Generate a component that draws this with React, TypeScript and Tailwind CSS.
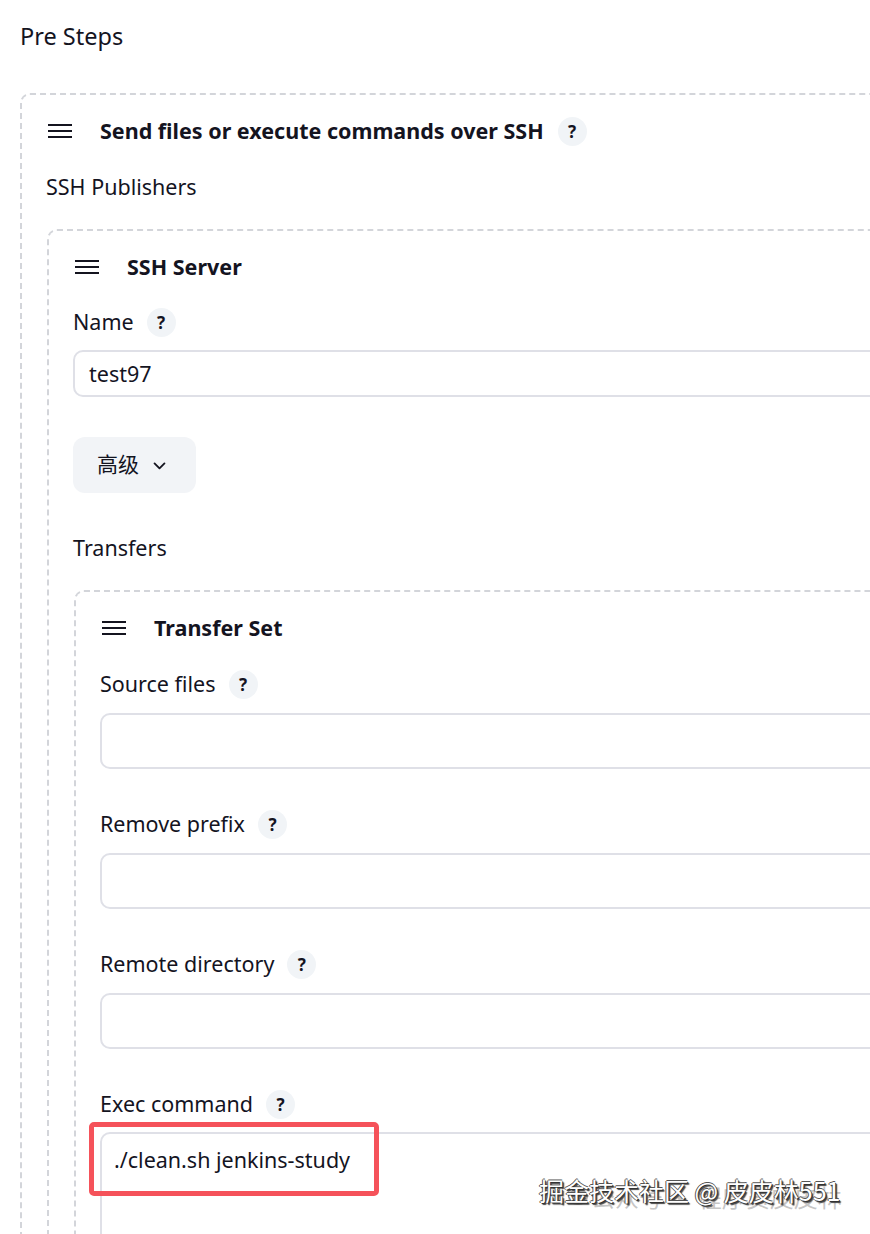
import type { ReactNode } from 'react';

const font = { fontFamily: '"Noto Sans", "Noto Sans CJK SC", sans-serif' };

function DragHandle() {
  return (
    <svg width="24" height="14" viewBox="0 0 24 14" className="shrink-0">
      <rect x="0" y="0" width="24" height="2" fill="#14141f" />
      <rect x="0" y="6" width="24" height="2" fill="#14141f" />
      <rect x="0" y="12" width="24" height="2" fill="#14141f" />
    </svg>
  );
}

function Help() {
  return (
    <span className="flex h-[29px] w-[29px] shrink-0 items-center justify-center rounded-full bg-[#f1f4f7] text-[17px] leading-none font-bold text-[#14141f]">
      ?
    </span>
  );
}

function SectionHeader({ title, help }: { title: string; help?: boolean }) {
  return (
    <div className="flex h-[28px] items-center">
      <span className="ml-[2px]">
        <DragHandle />
      </span>
      <span className="ml-[28px] text-[21.5px] leading-[28px] font-bold">{title}</span>
      {help && (
        <span className="ml-[14px]">
          <Help />
        </span>
      )}
    </div>
  );
}

function Repeated({ children }: { children: ReactNode }) {
  return (
    <div className="w-[calc(100%+60px)] rounded-[10px] border-2 border-dashed border-[#d3d5da] pt-[22px] pr-[24px] pb-[30px] pl-[24px]">
      {children}
    </div>
  );
}

function FieldLabel({ text }: { text: string }) {
  return (
    <div className="flex h-[28px] items-center gap-[13px]">
      <span className="text-[21.5px] leading-[28px]">{text}</span>
      <Help />
    </div>
  );
}

function Field({ label, value, first }: { label: string; value?: string; first?: boolean }) {
  return (
    <div className={first ? 'mt-[28px]' : 'mt-[41px]'}>
      <FieldLabel text={label} />
      <div className="mt-[15px] h-[56px] rounded-[10px] border-2 border-[#dfe0e7] bg-white px-[14px] text-[21.5px] leading-[52px]">
        {value}
      </div>
    </div>
  );
}

export default function App() {
  return (
    <div
      className="relative h-[1234px] w-[870px] overflow-hidden bg-white text-[#14141f]"
      style={font}
    >
      <div className="pt-[21px] pl-[20px]">
        <h2 className="text-[23.5px] leading-[30px] font-normal">Pre Steps</h2>

        <div className="mt-[42px]">
          <Repeated>
            <SectionHeader title="Send files or execute commands over SSH" help />
            <div className="mt-[28px] text-[21.5px] leading-[28px]">SSH Publishers</div>

            <div className="mt-[28px] ml-[1px]">
              <Repeated>
                <SectionHeader title="SSH Server" />

                <div className="mt-[27px]">
                  <FieldLabel text="Name" />
                  <div className="mt-[14px] h-[47px] rounded-[10px] border-2 border-[#dfe0e7] bg-white px-[14px] text-[21.5px] leading-[43px]">
                    test97
                  </div>
                </div>

                <button
                  type="button"
                  className="mt-[40px] flex h-[56px] w-[123px] items-center gap-[12px] rounded-[12px] bg-[#f2f4f7] pl-[24px] text-[21px]"
                >
                  <span>高级</span>
                  <svg width="17" height="17" viewBox="0 0 24 24" fill="none" stroke="#14141f" strokeWidth="2.6" strokeLinecap="round" strokeLinejoin="round">
                    <path d="M5 9l7 7 7-7" />
                  </svg>
                </button>

                <div className="mt-[41px] text-[21.5px] leading-[28px]">Transfers</div>

                <div className="mt-[28px] ml-[1px]">
                  <Repeated>
                    <SectionHeader title="Transfer Set" />
                    <Field label="Source files" first />
                    <Field label="Remove prefix" />
                    <Field label="Remote directory" />

                    <div className="mt-[41px]">
                      <FieldLabel text="Exec command" />
                      <div className="relative mt-[14px] h-[200px] rounded-[10px] border-2 border-[#dfe0e7] bg-white px-[12px] pt-[12px] text-[21.5px] leading-[28px]">
                        ./clean.sh jenkins-study
                        <div className="absolute top-[-12px] left-[-13px] h-[74px] w-[290px] rounded-[5px] border-[5px] border-[#f5525a]" />
                      </div>
                    </div>
                  </Repeated>
                </div>
              </Repeated>
            </div>
          </Repeated>
        </div>
      </div>

      {/* watermark */}
      <div className="pointer-events-none absolute top-[1182px] left-[567px] flex items-center text-[24px] leading-[30px] text-[#a0a0a0]/60">
        <svg width="22" height="20" viewBox="0 0 22 20" className="mr-[2px]">
          <ellipse cx="11" cy="10" rx="10" ry="8" fill="#8a8a8a" opacity="0.7" />
        </svg>
        <span style={{ fontFamily: '"Noto Sans CJK SC", sans-serif' }}>公众号 · 程序员皮皮林</span>
      </div>
      <div
        className="pointer-events-none absolute top-[1175px] left-[539px] text-[25px] leading-[30px] text-white"
        style={{
          fontFamily: '"Noto Sans CJK SC", sans-serif',
          textShadow: '1px 1px 0 #333, -1px 0 0 #555, 0 -1px 0 #555, 2px 2px 1px #444',
        }}
      >
        掘金技术社区 @ 皮皮林551
      </div>
    </div>
  );
}
